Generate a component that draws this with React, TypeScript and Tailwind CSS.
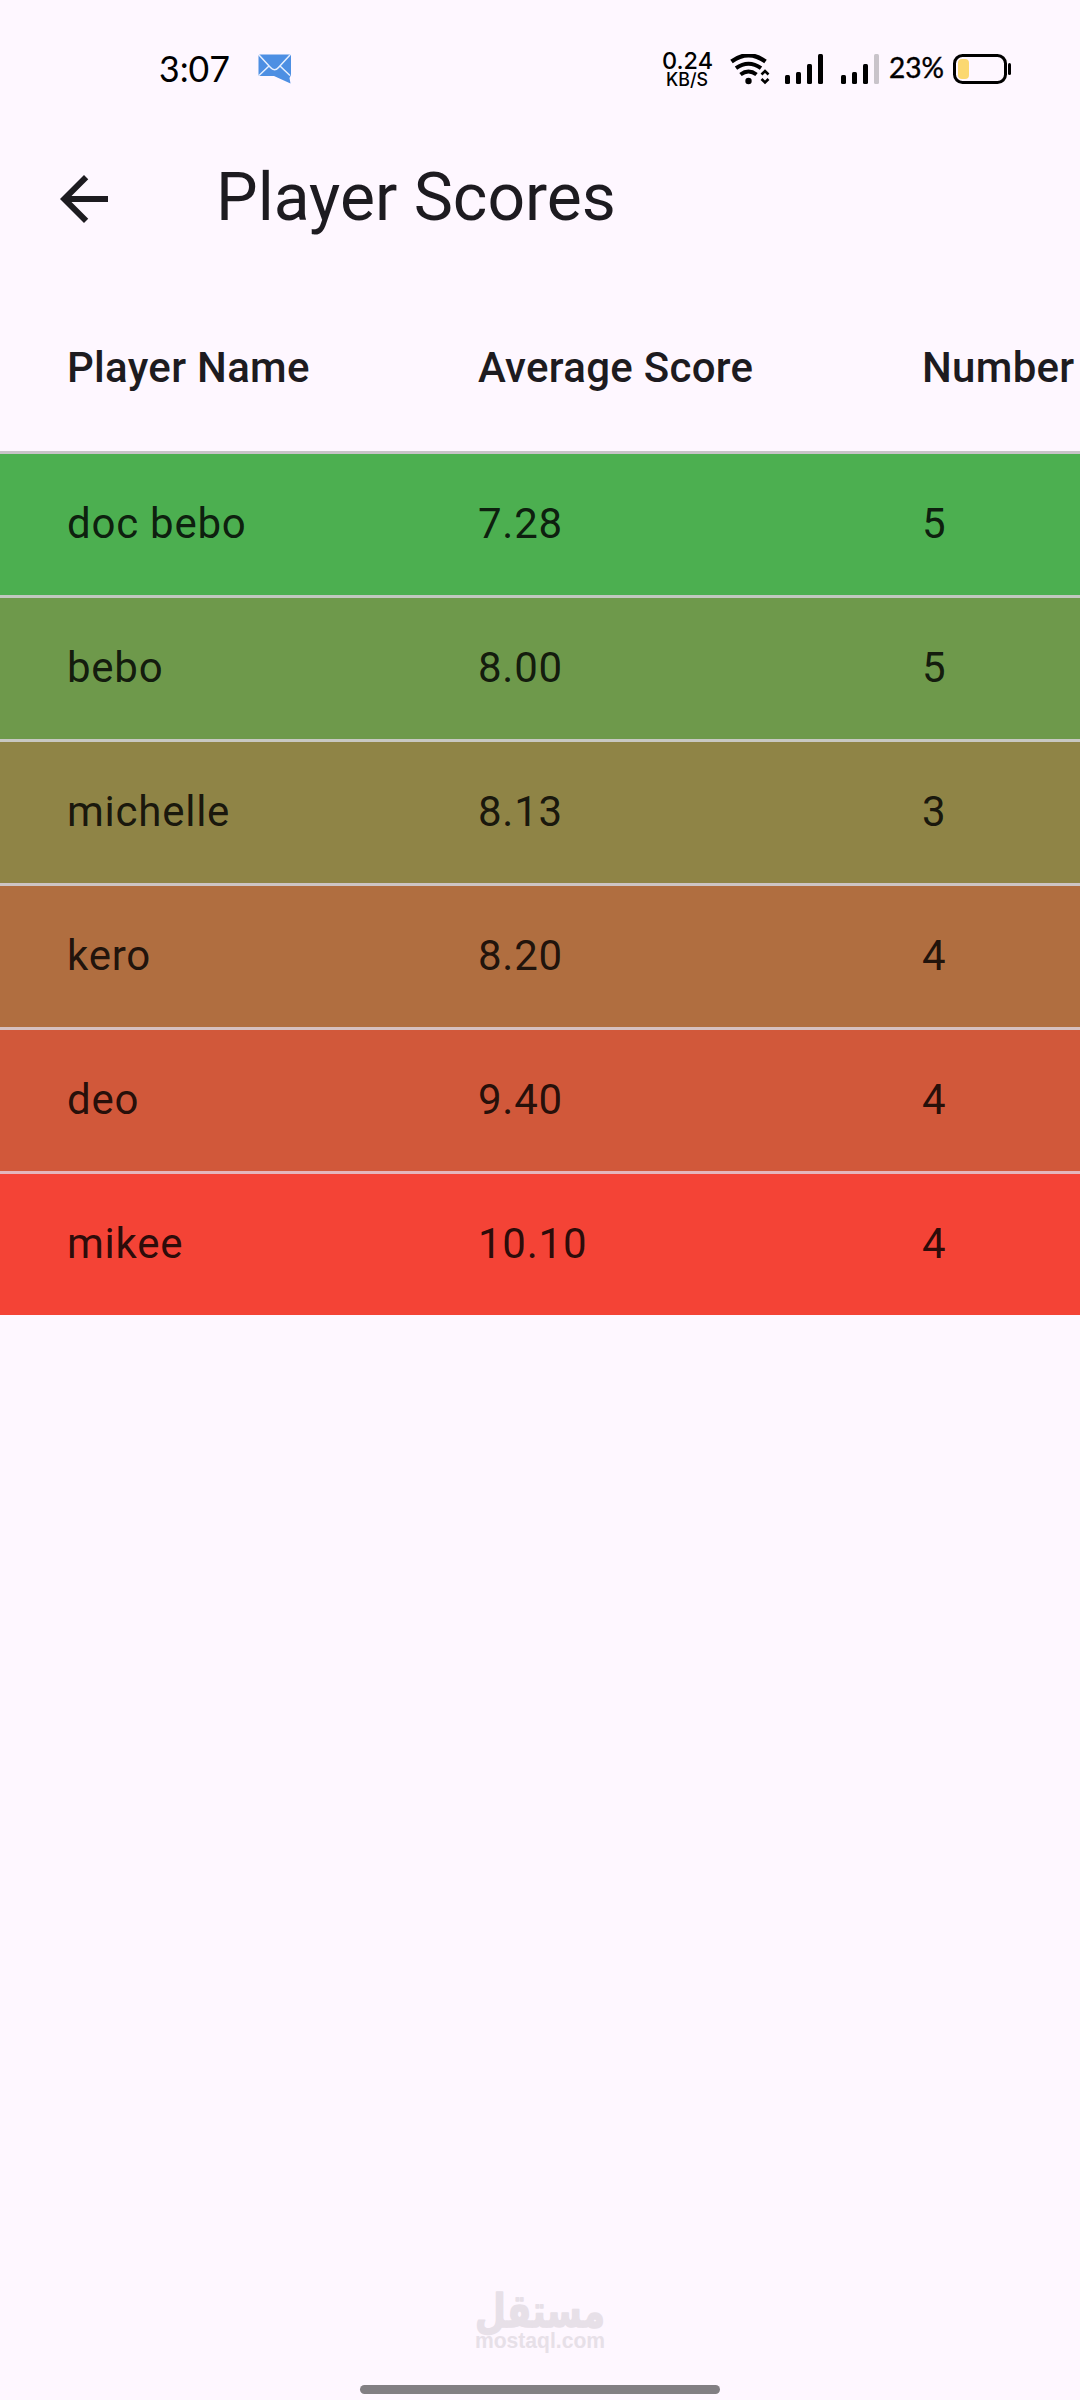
import React from 'react';

interface PlayerScore {
  name: string;
  average: string;
  games: number;
  row: string;
}

const players: PlayerScore[] = [
  { name: 'doc bebo', average: '7.28', games: 5, row: 'bg-[#4caf50] border-[#c8c4c8]' },
  { name: 'bebo', average: '8.00', games: 5, row: 'bg-[#6e994b] border-[#c2c8c0]' },
  { name: 'michelle', average: '8.13', games: 3, row: 'bg-[#8f8446] border-[#c8c8c2]' },
  { name: 'kero', average: '8.20', games: 4, row: 'bg-[#b06e40] border-[#cdc5c4]' },
  { name: 'deo', average: '9.40', games: 4, row: 'bg-[#d1583a] border-[#d6c0c0]' },
  { name: 'mikee', average: '10.10', games: 4, row: 'bg-[#f44336] border-[#e4b6bc]' },
];

const SignalBars = ({ weak = false }: { weak?: boolean }) => (
  <svg width="38" height="30" viewBox="0 0 38 30" className="shrink-0">
    <rect x="0" y="21" width="5" height="9" rx="1.5" />
    <rect x="11" y="18" width="5" height="12" rx="1.5" />
    <rect x="22" y="10" width="5" height="20" rx="1.5" />
    <rect x="33" y="0" width="5" height="30" rx="1.5" fill={weak ? '#c9c4ca' : '#000'} />
  </svg>
);

const StatusBar = () => (
  <div className="flex h-[115px] items-start pt-[54px] text-black">
    <svg width="70" height="30" className="mr-[29px] ml-[159px] shrink-0 overflow-visible">
      <text x="0" y="28" fontSize="36" textLength="71" lengthAdjust="spacingAndGlyphs" className="font-['Lato']">3:07</text>
    </svg>
    <svg width="33" height="30" viewBox="0 0 33 30" className="shrink-0">
      <path d="M2 0.5h29.5q1.5 0 1.5 1.5v19l-1.500 3 1 5.500L16 22H2q-1.500 0-1.500-1.500V2Q.5.5 2 .5z" fill="#4d8fe3" />
      <path d="M1 1l11.500 12.500q4 4.500 8 0L32 1M1 21.500l10-9.500M32 21.500l-10-9.500" fill="none" stroke="#e6efff" strokeWidth="1.500" />
    </svg>
    <svg width="52" height="38" className="-mt-[3px] ml-[371px] shrink-0 overflow-visible font-['Inter']">
      <text x="0" y="18" fontSize="23.500" fontWeight="500" textLength="51" lengthAdjust="spacingAndGlyphs">0.24</text>
      <text x="4" y="35" fontSize="18" fontWeight="500" textLength="42" lengthAdjust="spacingAndGlyphs">KB/S</text>
    </svg>
    <svg width="40" height="32" viewBox="0 0 40 32" className="ml-[16px] shrink-0" fill="none" stroke="#000">
      <path d="M1.500 7.500q17-12.500 34 0" strokeWidth="4.200" />
      <path d="M6 14.200q12.500-9 25 0" strokeWidth="4" />
      <path d="M10.500 20.500q8-6 16 0" strokeWidth="4" />
      <circle cx="18.500" cy="27" r="3.200" fill="#000" stroke="none" />
      <path d="M31.500 20.500l3.500-3.500 3.500 3.500M31.500 25l3.500 3.500 3.500-3.500" strokeWidth="2.600" />
    </svg>
    <div className="ml-[15px] flex gap-[18px]">
      <SignalBars />
      <SignalBars weak />
    </div>
    <svg width="54" height="30" className="ml-[10px] shrink-0 overflow-visible font-['Lato']">
      <text x="0" y="24" fontSize="28.500" fontWeight="400" stroke="#000" strokeWidth="0.400" textLength="55" lengthAdjust="spacingAndGlyphs">23%</text>
    </svg>
    <svg width="58" height="30" viewBox="0 0 58 30" className="ml-[10px] shrink-0">
      <rect x="1.500" y="1.500" width="51" height="27" rx="8" fill="none" stroke="#000" strokeWidth="3" />
      <rect x="5" y="5" width="11" height="20" rx="4" fill="#fbd871" />
      <rect x="55" y="9" width="3" height="12" rx="1.500" />
    </svg>
  </div>
);

const AppBar = () => (
  <header className="flex h-[168px] items-center">
    <svg width="72" height="72" viewBox="0 0 24 24" className="ml-[48px] shrink-0" fill="#1d1b20">
      <path d="M20 11H7.830l5.590-5.590L12 4l-8 8 8 8 1.410-1.410L7.830 13H20v-2z" />
    </svg>
    <h1 className="ml-[96px] pb-[2px] text-[66px] leading-[84px] font-normal whitespace-nowrap">Player Scores</h1>
  </header>
);

const ScoreTable = () => (
  <div className="overflow-hidden text-[42px] leading-[60px] whitespace-nowrap">
    <div className="grid h-[168px] grid-cols-[411px_444px_400px] items-center pt-[2px] pl-[67px] font-medium tracking-[0.3px]">
      <span>Player Name</span>
      <span>Average Score</span>
      <span>Number</span>
    </div>
    {players.map((player) => (
      <div
        key={player.name}
        className={`grid h-[144px] grid-cols-[411px_444px_400px] items-center border-t-[3px] pb-[1px] pl-[67px] tracking-[0.75px] text-black/84 ${player.row}`}
      >
        <span>{player.name}</span>
        <span>{player.average}</span>
        <span>{player.games}</span>
      </div>
    ))}
  </div>
);

const Watermark = () => (
  <svg width="130" height="64" className="mx-auto overflow-visible" fill="#e7e0e8">
    <text
      x="130"
      y="36"
      direction="rtl"
      fontSize="46"
      fontWeight="700"
      stroke="#e7e0e8"
      strokeWidth="1.500"
      strokeLinejoin="round"
      textLength="130"
      lengthAdjust="spacingAndGlyphs"
      className="font-['DejaVu_Sans']"
    >
      مستقل
    </text>
    <text x="0" y="56.500" fontSize="22.500" fontWeight="700" textLength="130" lengthAdjust="spacingAndGlyphs" className="font-['Liberation_Sans']">mostaql.com</text>
  </svg>
);

export default function App() {
  return (
    <div className="flex h-[2400px] w-[1080px] flex-col overflow-hidden bg-[#fef7ff] font-['Roboto',sans-serif] text-[#1d1b20]">
      <StatusBar />
      <AppBar />
      <ScoreTable />
      <footer className="mt-auto flex flex-col items-center pb-[6px]">
        <Watermark />
        <div className="mt-[30px] h-[9px] w-[360px] rounded-full bg-[#827f83]" />
      </footer>
    </div>
  );
}
